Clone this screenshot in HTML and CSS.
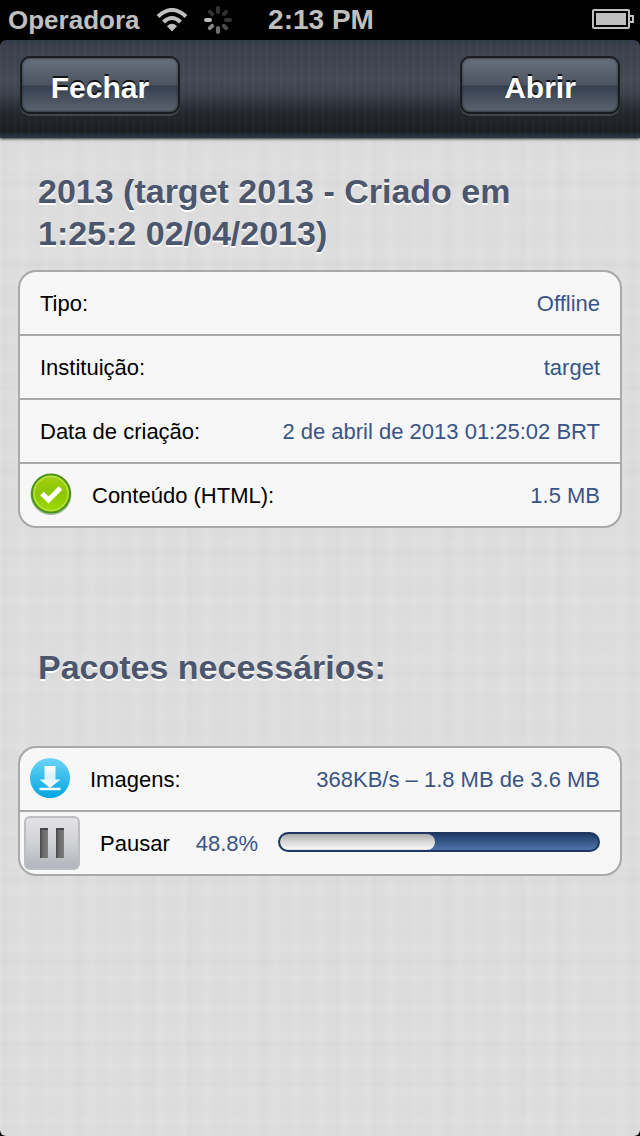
FILE: index.html
```html
<!DOCTYPE html>
<html lang="pt-BR">
<head>
<meta charset="utf-8">
<meta name="viewport" content="width=device-width, initial-scale=1">
<title>Pacotes</title>
<link rel="stylesheet" href="styles.css">
</head>
<body>
<div class="screen">
  <div class="status-bar">
    <div class="status-left">
      <span>Operadora</span>
      <svg class="wifi" width="32" height="24" viewBox="0 0 32 24" aria-hidden="true">
        <g fill="none" stroke="#bfbfbf" stroke-width="4">
          <path d="M2 8.500Q16 -4.500 30 8.500"/>
          <path d="M7.500 14Q16 6 24.500 14"/>
        </g>
        <path d="M11 18.200Q16 13.500 21 18.200L16 23.500Z" fill="#bfbfbf"/>
      </svg>
      <svg class="spinner" width="28" height="28" viewBox="-14 -14 28 28" aria-hidden="true">
        <g stroke-width="4" stroke-linecap="round">
          <path d="M-12 0H-8" stroke="#b8b8b8"/>
          <path d="M-8.200 8.200L-5.800 5.800" stroke="#858585"/>
          <path d="M0 12V8" stroke="#6e6e6e"/>
          <path d="M8.200 8.200L5.800 5.800" stroke="#4c4c4c"/>
          <path d="M12 0H8" stroke="#333"/>
          <path d="M8.200 -8.200L5.800 -5.800" stroke="#303030"/>
          <path d="M0 -12V-8" stroke="#333"/>
          <path d="M-8.200 -8.200L-5.800 -5.800" stroke="#303030"/>
        </g>
      </svg>
    </div>
    <time class="clock">2:13 PM</time>
    <svg class="battery" width="42" height="20" viewBox="0 0 42 20" role="img" aria-label="Bateria">
      <rect x="1" y="1" width="36" height="18" rx="1" fill="none" stroke="#bfbfbf" stroke-width="2"/>
      <rect x="4" y="4" width="30" height="12" fill="#bfbfbf"/>
      <path d="M37 7H41V13H37" fill="none" stroke="#bfbfbf" stroke-width="2"/>
    </svg>
  </div>
  <header class="nav-bar">
    <button class="nav-button" type="button">Fechar</button>
    <button class="nav-button" type="button">Abrir</button>
  </header>
  <main class="content">
    <h1 class="section-title">2013 (target 2013 - Criado em 1:25:2 02/04/2013)</h1>
    <section class="group">
      <div class="row"><span class="label">Tipo:</span><span class="value">Offline</span></div>
      <div class="row"><span class="label">Instituição:</span><span class="value">target</span></div>
      <div class="row"><span class="label">Data de criação:</span><span class="value">2 de abril de 2013 01:25:02 BRT</span></div>
      <div class="row row-icon">
        <svg class="row-badge" width="42" height="42" viewBox="0 0 42 42" aria-hidden="true">
          <defs><linearGradient id="green" x1="0" y1="0" x2="0" y2="1"><stop offset="0" stop-color="#a6cf16"/><stop offset=".5" stop-color="#8bc600"/><stop offset="1" stop-color="#a0dc05"/></linearGradient></defs>
          <circle cx="21" cy="21.500" r="20.500" fill="#a9b8a0"/>
          <circle cx="21" cy="20.500" r="19" fill="url(#green)" stroke="#4f9418" stroke-width="2"/>
          <circle cx="21" cy="20.500" r="17" fill="none" stroke="#b6e341" stroke-width="1.500"/>
          <path d="M12 20.500L18.500 27L30.500 15" fill="none" stroke="#fff" stroke-width="5"/>
        </svg>
        <span class="label">Conteúdo (HTML):</span><span class="value">1.5 MB</span>
      </div>
    </section>
    <h2 class="section-title packages-title">Pacotes necessários:</h2>
    <section class="group">
      <div class="row row-icon">
        <svg class="row-badge" width="40" height="40" viewBox="0 0 40 40" aria-hidden="true">
          <defs>
            <linearGradient id="blue" x1="0" y1="0" x2="0" y2="1"><stop offset="0" stop-color="#6cd4f8"/><stop offset="1" stop-color="#00a5df"/></linearGradient>
            <linearGradient id="arrow" x1="0" y1="0" x2="0" y2="1"><stop offset="0" stop-color="#fff"/><stop offset=".5" stop-color="#d9f2fc"/><stop offset="1" stop-color="#fff"/></linearGradient>
          </defs>
          <circle cx="20" cy="20" r="20" fill="url(#blue)"/>
          <path d="M14.500 8H25.500V21.500H30.500L20 30L9.500 21.500H14.500Z" fill="url(#arrow)"/>
          <path d="M9.500 31H30.500" fill="none" stroke="#f4fcff" stroke-width="2.500"/>
        </svg>
        <span class="label">Imagens:</span><span class="value">368KB/s – 1.8 MB de 3.6 MB</span>
      </div>
      <div class="row row-progress">
        <button class="pause-button" type="button" aria-labelledby="pause-label">
          <svg width="24" height="30" viewBox="0 0 24 30" aria-hidden="true">
            <defs><linearGradient id="bar"><stop offset="0" stop-color="#484848"/><stop offset=".35" stop-color="#696969"/><stop offset="1" stop-color="#7d7d7d"/></linearGradient></defs>
            <rect width="8" height="30" fill="url(#bar)"/>
            <rect x="16" width="8" height="30" fill="url(#bar)"/>
            <path d="M0 1H8M16 1H24" stroke="#484848" stroke-width="2"/>
          </svg>
        </button>
        <span class="label" id="pause-label">Pausar</span>
        <label class="percent" for="download-progress">48.8%</label>
        <progress class="progress" id="download-progress" max="100" value="48.8"></progress>
      </div>
    </section>
  </main>
</div>
</body>
</html>
```
FILE: styles.css
```css
* {
  box-sizing: border-box;
}

body {
  margin: 0;
  background: #000;
  font-family: "Liberation Sans", Arial, sans-serif;
  font-size: 22px;
  color: #000;
}

.screen {
  min-height: 100vh;
  display: flex;
  flex-direction: column;
}

.status-bar {
  height: 40px;
  padding: 0 6px 0 8px;
  display: grid;
  grid-template-columns: 1fr auto 1fr;
  align-items: center;
  background: #000;
  color: #bfbfbf;
  font-size: 26px;
  font-weight: bold;
}

.status-left {
  display: flex;
  align-items: center;
  gap: 16px;
}

.clock {
  font-size: 28px;
}

.battery {
  justify-self: end;
  margin-bottom: 2px;
}

.nav-bar {
  height: 98px;
  padding: 16px 20px;
  display: flex;
  justify-content: space-between;
  align-items: flex-start;
  border-radius: 6px 6px 0 0;
  background:
    repeating-linear-gradient(90deg, rgba(255, 255, 255, 0.02) 0 1px, transparent 2px 4px, rgba(0, 0, 0, 0.03) 5px, transparent 7px),
    linear-gradient(#303b48 0, #3b414c 6px, #454a55 40px, #3c424d 54px, #24282e 72px, #1c1e22 92px, #26303f 95px, #303641 98px);
  box-shadow: 0 1px 3px rgba(0, 0, 0, 0.8);
  position: relative;
}

.nav-button {
  width: 160px;
  height: 58px;
  padding: 6px 0 0;
  border: 2px solid #1a1c20;
  border-radius: 10px;
  background: linear-gradient(#6b707d, #4b5361 50%, #35404f 52%, #5d6370);
  box-shadow: inset 0 -1px 2px rgba(25, 28, 34, 0.6), inset 0 1px 2px rgba(40, 44, 52, 0.5), 0 2px 0 #43464b;
  color: #fff;
  font: bold 30px/36px "Liberation Sans", Arial, sans-serif;
  text-shadow: 0 -2px 0 rgba(0, 0, 0, 0.8);
}

.content {
  flex: 1;
  padding: 32px 18px;
  border-radius: 0 0 6px 6px;
  background:
    repeating-linear-gradient(90deg, rgba(255, 255, 255, 0.08) 0, transparent 6px 14px, rgba(255, 255, 255, 0.08) 23px),
    repeating-linear-gradient(90deg, transparent 0, rgba(0, 0, 0, 0.01) 5px, transparent 9px 37px),
    repeating-linear-gradient(rgba(255, 255, 255, 0.08) 0, transparent 5px 17px, rgba(255, 255, 255, 0.08) 29px),
    repeating-linear-gradient(transparent 0, rgba(0, 0, 0, 0.01) 4px, transparent 8px 41px),
    #dcdcdc;
}

.section-title {
  margin: 0 20px 16px;
  color: #4c566c;
  font-size: 34px;
  line-height: 42px;
  text-shadow: 0 2px 0 #fff;
}

.packages-title {
  margin-top: 118px;
  margin-bottom: 58px;
}

.group {
  border: 2px solid #a9a9a9;
  border-radius: 18px;
  background: #f7f7f7;
  background-clip: padding-box;
}

.row {
  height: 62px;
  padding: 0 20px;
  display: flex;
  align-items: center;
  line-height: 28px;
}

.row + .row {
  height: 64px;
  border-top: 2px solid #a9a9a9;
}

.label,
.value,
.percent {
  padding-top: 2px;
}

.value,
.percent {
  color: #385487;
}

.row .value {
  margin-left: auto;
}

.row-icon {
  padding-left: 10px;
  gap: 20px;
}

.row-badge {
  margin-bottom: 2px;
}

.row-progress {
  padding-left: 4px;
  gap: 20px;
}

.pause-button {
  width: 56px;
  height: 54px;
  padding: 0;
  display: grid;
  place-items: center;
  border: 2px solid #bdbec4;
  border-radius: 6px;
  background: linear-gradient(#e3e3e6, #d0d1d5 50%, #b3b5bc);
}

.percent {
  margin-left: 6px;
}

.progress {
  flex: 1;
  min-width: 0;
  height: 20px;
  margin-bottom: 2px;
  appearance: none;
  border: 2px solid #1c3861;
  border-radius: 10px;
  background: linear-gradient(#203d68, #4e73a8);
  overflow: hidden;
}

.progress::-webkit-progress-bar {
  background: transparent;
}

.progress::-webkit-progress-value {
  border-radius: 8px;
  background: linear-gradient(#aaa, #d5d5d5 45%, #f4f4f4 90%, #ddd);
}
```
